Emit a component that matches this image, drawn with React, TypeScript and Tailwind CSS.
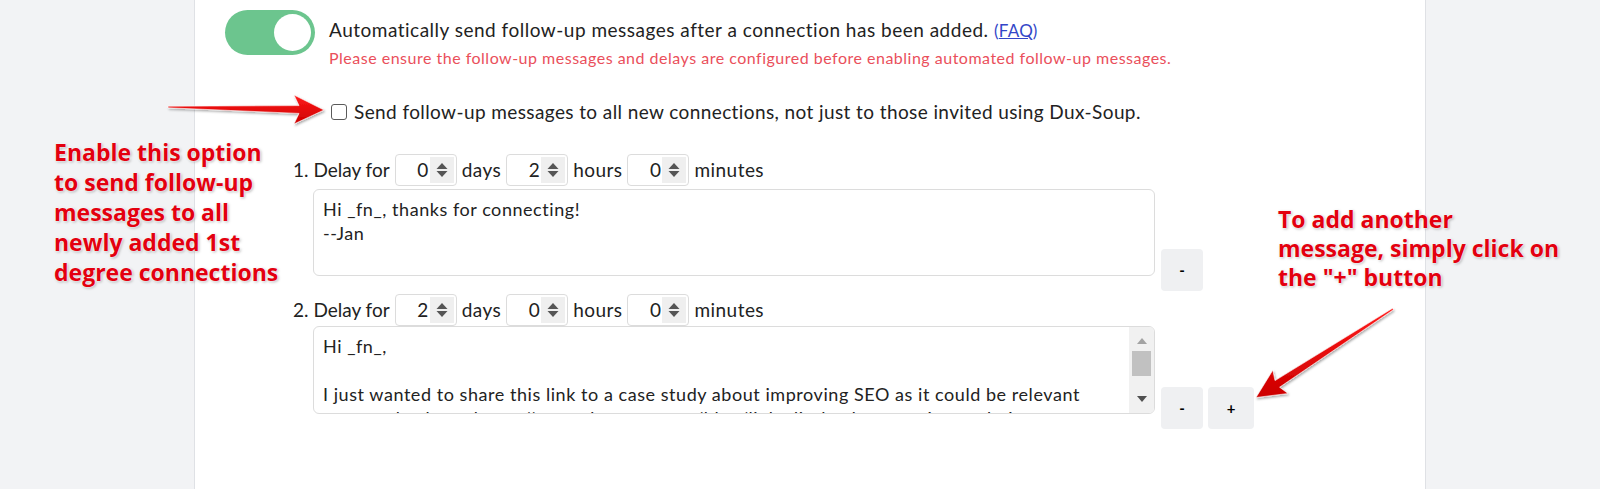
import React from "react";

function Spin() {
  return (
    <div className="w-[24px] h-[26px] bg-[#efefef] flex items-center justify-center ml-[1px]">
      <svg width="12" height="18" viewBox="0 0 12 18">
        <path d="M6 2 L11.5 8 L0.5 8 Z" fill="#555" />
        <path d="M6 16 L11.5 10 L0.5 10 Z" fill="#555" />
      </svg>
    </div>
  );
}

function NumBox({ v }: { v: string }) {
  return (
    <div className="w-[62px] h-[32px] border border-[#dcdcdc] rounded-[4px] flex items-center justify-end pr-[2px] bg-white">
      <span className="text-[19px] leading-[24px]">{v}</span>
      <Spin />
    </div>
  );
}

function DelayRow({ n, d, h, m }: { n: string; d: string; h: string; m: string }) {
  return (
    <div className="flex items-center pl-[98px] h-[32px] gap-[5px] text-[19px] leading-[24px] tracking-[0.45px]">
      <span className="tracking-normal">{n}. Delay for</span>
      <NumBox v={d} />
      <span>days</span>
      <NumBox v={h} />
      <span>hours</span>
      <NumBox v={m} />
      <span>minutes</span>
    </div>
  );
}

function Btn({ label, w }: { label: string; w: string }) {
  return (
    <div className={`${w} h-[42px] bg-[#eff0f2] rounded-[4px] flex items-center justify-center text-[15px] font-bold text-black`}>
      {label}
    </div>
  );
}

export default function App() {
  return (
    <div
      className="relative w-[1600px] h-[489px] bg-[#f2f3f5] overflow-hidden text-[#222]"
      style={{ fontFamily: "Lato, 'Noto Sans', sans-serif" }}
    >
      <div className="ml-[194px] w-[1232px] h-[489px] bg-white border-x border-[#dfe1e5]">
        {/* toggle row */}
        <div className="pt-[10px] pl-[30px] flex">
          <div className="w-[90px] h-[45px] rounded-full bg-[#6cc58e] flex items-center justify-end pr-[4px]">
            <div className="w-[37px] h-[37px] rounded-full bg-white" />
          </div>
          <div className="ml-[14px] pt-[8px]">
            <div className="text-[19px] leading-[24px] tracking-[0.5px]">
              Automatically send follow-up messages after a connection has been added.{" "}
              <span className="text-[#3346c8] text-[17px] tracking-[0.3px]">
                (<span className="underline">FAQ</span>)
              </span>
            </div>
            <div className="text-[16px] leading-[20px] mt-[5px] tracking-[0.5px] text-[#ea4f5b]">
              Please ensure the follow-up messages and delays are configured before enabling automated follow-up messages.
            </div>
          </div>
        </div>

        {/* checkbox row */}
        <div className="mt-[32px] pl-[136px] flex items-center h-[24px] text-[19px] leading-[24px] tracking-[0.4px]">
          <div className="w-[16px] h-[16px] border border-[#5a5a5a] rounded-[3px] bg-white" />
          <span className="ml-[7px]">Send follow-up messages to all new connections, not just to those invited using Dux-Soup.</span>
        </div>

        {/* row 1 */}
        <div className="mt-[30px]">
          <DelayRow n="1" d="0" h="2" m="0" />
          <div className="flex pl-[118px] mt-[3px]">
            <div className="w-[842px] h-[87px] border border-[#dcdcdc] rounded-[6px] px-[9px] pt-[7px] text-[18px] leading-[24px] tracking-[0.55px]">
              <div>Hi _fn_, thanks for connecting!</div>
              <div>--Jan</div>
            </div>
            <div className="ml-[6px] mt-[60px]">
              <Btn label="-" w="w-[42px]" />
            </div>
          </div>
        </div>

        {/* row 2 */}
        <div className="mt-[3px]">
          <DelayRow n="2" d="2" h="0" m="0" />
          <div className="flex pl-[118px]">
            <div className="w-[842px] h-[88px] border border-[#dcdcdc] rounded-[6px] flex overflow-hidden">
              <div className="flex-1 px-[9px] pt-[7px] text-[18px] leading-[24px] tracking-[0.55px] overflow-hidden whitespace-nowrap">
                <div>Hi _fn_,</div>
                <div>&nbsp;</div>
                <div>I just wanted to share this link to a case study about improving SEO as it could be relevant</div>
                <div>to you: check out https://www.duxsoup.com/blog/linkedin-lead-generation-techniques</div>
              </div>
              <div className="w-[25px] bg-[#f1f1f1] flex flex-col items-center">
                <svg width="12" height="22" viewBox="0 0 12 22" className="mt-[2px]">
                  <path d="M6 9 L11 15 L1 15 Z" fill="#a3a3a3" />
                </svg>
                <div className="w-[19px] h-[25px] bg-[#c1c1c1]" />
                <div className="flex-1" />
                <svg width="12" height="22" viewBox="0 0 12 22" className="mb-[2px]">
                  <path d="M6 13 L11 7 L1 7 Z" fill="#505050" />
                </svg>
              </div>
            </div>
            <div className="ml-[6px] mt-[61px] flex gap-[5px]">
              <Btn label="-" w="w-[42px]" />
              <Btn label="+" w="w-[46px]" />
            </div>
          </div>
        </div>
      </div>

      {/* annotations */}
      <div
        className="absolute left-[54px] top-[137px] text-[23px] leading-[30px] font-bold text-[#e3000f] [text-shadow:0_0_2px_#fff,0_0_2px_#fff,1px_1px_3px_rgba(0,0,0,0.35)]"
        style={{ fontFamily: "'Open Sans', sans-serif" }}
      >
        <div>Enable this option</div>
        <div>to send follow-up</div>
        <div>messages to all</div>
        <div>newly added 1st</div>
        <div>degree connections</div>
      </div>
      <div
        className="absolute left-[1278px] top-[205px] text-[23px] leading-[29px] font-bold text-[#e3000f] [text-shadow:0_0_2px_#fff,0_0_2px_#fff,1px_1px_3px_rgba(0,0,0,0.35)]"
        style={{ fontFamily: "'Open Sans', sans-serif" }}
      >
        <div>To add another</div>
        <div>message, simply click on</div>
        <div>the "+" button</div>
      </div>

      <svg className="absolute left-0 top-0 pointer-events-none" width="1600" height="489" viewBox="0 0 1600 489">
        <defs>
          <linearGradient id="rg" x1="0" y1="0" x2="0" y2="1">
            <stop offset="0" stopColor="#ff1a1a" />
            <stop offset="1" stopColor="#cc0000" />
          </linearGradient>
          <filter id="sh" x="-10%" y="-30%" width="120%" height="160%">
            <feDropShadow dx="1" dy="1.5" stdDeviation="1.2" floodColor="#000" floodOpacity="0.35" />
          </filter>
        </defs>
        <polygon
          points="168,106.2 299,105.6 294,95 324,110 294,124 299,113.4 168,107.8"
          fill="url(#rg)"
          stroke="#fff"
          strokeWidth="0.6"
          filter="url(#sh)"
        />
        <polygon
          points="1393.4,309.7 1279.6,387.2 1288,393.5 1256,397.5 1272.8,370.2 1275,380.6 1392.6,308.3"
          fill="url(#rg)"
          stroke="#fff"
          strokeWidth="0.6"
          filter="url(#sh)"
        />
      </svg>
    </div>
  );
}
